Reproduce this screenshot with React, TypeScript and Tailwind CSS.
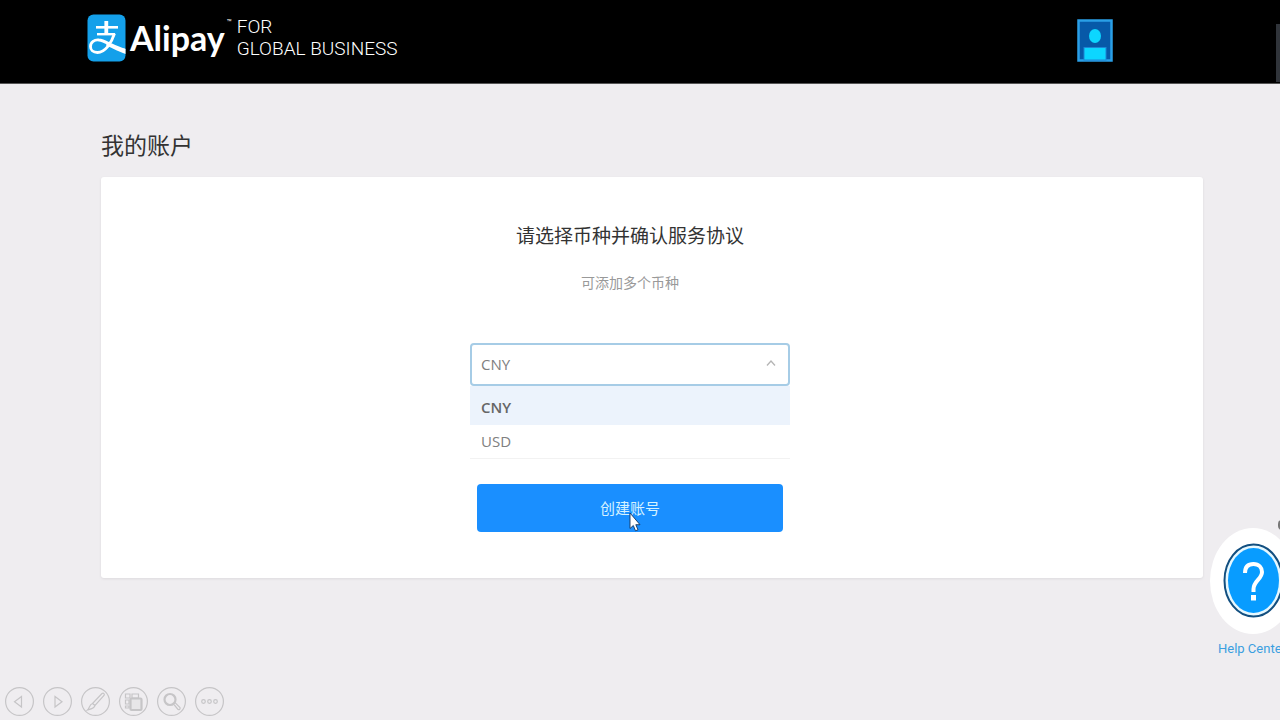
import { useState } from "react";
import type { ReactNode } from "react";

const currencies = ["CNY", "USD"];

function LogoMark() {
  return (
    <svg viewBox="0 0 39 48" className="h-12 w-[39px] shrink-0" aria-hidden="true">
      <rect x="0.5" y="0.5" width="38" height="47" rx="6" fill="#14a0ea" />
      <g fill="none" stroke="#fff">
        <path d="M9 13.3H31" strokeWidth="2.6" />
        <path d="M19.3 7V20" strokeWidth="3.8" />
        <path d="M10 20.2H28" strokeWidth="2.4" />
        <path
          d="M27.5 19.5C24.5 29 18 38.5 10.5 38.5C6 38.5 3.5 36 3.5 32.5C3.5 28 7.5 25.5 12 26C18 26.5 26 33 38 36"
          strokeWidth="2.8"
        />
      </g>
      <path d="M20 28.5C26 32 33 34.5 38.5 35V40C33 38 26 34.5 19 31.5Z" fill="#fff" />
    </svg>
  );
}

function AccountIcon() {
  return (
    <svg viewBox="0 0 36 44" className="h-11 w-9" aria-hidden="true">
      <rect x="1.5" y="2.5" width="33" height="40" fill="#0759a8" stroke="#2a9fe6" strokeWidth="2.5" />
      <ellipse cx="18" cy="18" rx="6" ry="7" fill="#0cd6ff" />
      <rect x="7" y="29.5" width="22" height="12.5" fill="#0cd6ff" stroke="#1d86d4" />
    </svg>
  );
}

function HelpIcon() {
  return (
    <svg viewBox="0 0 86 106" className="h-[106px] w-[86px]" aria-hidden="true">
      <ellipse cx="43" cy="53" rx="43" ry="53" fill="#fff" />
      <ellipse cx="43.5" cy="52.5" rx="29" ry="36" fill="#e6f8ff" stroke="#124f80" strokeWidth="2" />
      <ellipse cx="43.5" cy="52.5" rx="25.5" ry="32.5" fill="#089cff" />
      <path
        d="M35 45C35 38.5 38.5 36 43.5 36C49 36 52 39.5 52 44C52 51 43.5 53 43.5 61V64"
        fill="none"
        stroke="#fff"
        strokeWidth="4"
      />
      <rect x="41" y="67" width="5" height="5.5" fill="#fff" />
    </svg>
  );
}

function Pointer() {
  return (
    <svg viewBox="0 0 12 20" className="absolute top-7 left-[152px] h-5 w-3" aria-hidden="true">
      <path
        d="M1 1V16.5L4.3 13.5L6.5 18.8L9 17.8L6.8 12.7H11Z"
        fill="#fff"
        stroke="#17375c"
        strokeWidth="0.9"
      />
    </svg>
  );
}

const controls: { label: string; icon: ReactNode }[] = [
  { label: "Previous", icon: <path d="M16.5 9.5V20L9.5 14.7Z" /> },
  { label: "Next", icon: <path d="M12 9.5V20L19 14.7Z" /> },
  {
    label: "Pen",
    icon: (
      <path d="M21 6.5C22.5 5.5 24 7 23 8.5L14 18.5L11.5 16.5ZM11.5 16.5L14 18.5C13 21.5 10 22 6.5 23C8.5 21 8.5 17.5 11.5 16.5Z" />
    ),
  },
  {
    label: "Slides",
    icon: (
      <>
        <path d="M6.5 7H11V11H6.5ZM13 7H19.5V11H13ZM6.5 13H10V17H6.5ZM6.5 19H10V21H6.5Z" />
        <rect x="11.5" y="11.5" width="11" height="11.5" rx="1" fill="#e7e6e8" strokeWidth="2.2" />
      </>
    ),
  },
  {
    label: "Zoom",
    icon: (
      <>
        <circle cx="13" cy="12.5" r="5.5" strokeWidth="2.2" />
        <path d="M16.5 17L18 15.5L23 20.5C23.5 22 22.5 23 21 22.5Z" />
      </>
    ),
  },
  {
    label: "More",
    icon: (
      <>
        <circle cx="8.5" cy="14.5" r="1.8" />
        <circle cx="14.5" cy="14.5" r="1.8" />
        <circle cx="20.5" cy="14.5" r="1.8" />
      </>
    ),
  },
];

export default function App() {
  const [currency, setCurrency] = useState("CNY");

  return (
    <div className="relative flex min-h-screen flex-col overflow-hidden bg-[#efedf0] font-['Open_Sans','Noto_Sans_CJK_SC',sans-serif] text-[#333]">
      <header className="flex h-[84px] items-start justify-between border-b border-[#555] bg-black pt-[14px] pr-[167px] pl-[87px] text-white">
        <a href="#home" className="flex items-start">
          <LogoMark />
          <span className="ml-1 font-[Lato] text-[34px] leading-[48px] font-bold">Alipay</span>
          <span className="mt-1 ml-[2px] font-[Roboto] text-[8px] leading-[10px]">™</span>
          <span className="mt-[2px] ml-[5px] flex flex-col font-[Roboto] text-[19px] leading-[22px] font-light">
            <span>FOR</span>
            <span>GLOBAL BUSINESS</span>
          </span>
        </a>
        <button type="button" aria-label="Account" className="mt-1">
          <AccountIcon />
        </button>
      </header>

      <main className="mr-[77px] ml-[101px] pt-[42px]">
        <h1 className="text-[23px] leading-[38px]">我的账户</h1>
        <section className="mt-[13px] flex flex-col items-center rounded-[3px] bg-white pt-[42px] pr-[44px] pb-[46px] shadow-[0_1px_3px_rgba(0,0,0,0.08)]">
          <h2 className="text-[19px] leading-[34px]">请选择币种并确认服务协议</h2>
          <p className="mt-[18px] text-[14px] leading-6 text-[#999]">可添加多个币种</p>

          <div className="relative mt-12 w-80">
            <select
              aria-label="币种"
              value={currency}
              onChange={(event) => setCurrency(event.target.value)}
              className="block h-[43px] w-full appearance-none rounded-[4px] border-2 border-[#a6cce6] bg-white px-[9px] text-[15px] text-[#808080] outline-none"
            >
              {currencies.map((code) => (
                <option key={code}>{code}</option>
              ))}
            </select>
            <svg
              viewBox="0 0 10 8"
              className="pointer-events-none absolute top-4 right-[14px] h-2 w-[10px]"
              fill="none"
              stroke="#b5b5b5"
              strokeWidth="1.3"
              aria-hidden="true"
            >
              <path d="M1 6.5L5 2L9 6.5" />
            </svg>
            <ul className="absolute top-full left-0 w-full border-b border-[#f2f2f2] bg-white text-[15px] text-[#808080]">
              {currencies.map((code) => (
                <li key={code}>
                  <button
                    type="button"
                    onClick={() => setCurrency(code)}
                    className={
                      code === currency
                        ? "block h-[39px] w-full bg-[#ecf3fc] px-[11px] pt-1 text-left font-semibold text-[#666]"
                        : "block h-[33px] w-full px-[11px] text-left"
                    }
                  >
                    {code}
                  </button>
                </li>
              ))}
            </ul>
          </div>

          <button
            type="button"
            className="relative mt-[98px] h-[48px] w-[306px] rounded-[4px] bg-[#1a8fff] text-[15px] text-[#d5f2ff]"
          >
            创建账号
            <Pointer />
          </button>
        </section>
      </main>

      <div className="absolute top-6 right-0 h-[58px] w-1 bg-[#30343a]" />
      <div className="absolute top-[520px] right-[-6px] h-[10px] w-2 rounded-full bg-[#777]" />
      <a
        href="#help"
        className="absolute top-[528px] right-[-16px] flex w-[86px] flex-col items-center leading-5 whitespace-nowrap text-[#3b9fe0]"
      >
        <HelpIcon />
        <span className="mt-[5px] ml-2 self-start font-[Roboto] text-[13px]">Help Center</span>
      </a>

      <nav aria-label="Slide show" className="absolute bottom-1 left-[5px] flex gap-[9px]">
        {controls.map(({ label, icon }) => (
          <button key={label} type="button" aria-label={label}>
            <svg viewBox="0 0 29 29" className="size-[29px]" fill="none" stroke="#c6c5c7" strokeWidth="1.2">
              <circle cx="14.5" cy="14.5" r="13.9" />
              {icon}
            </svg>
          </button>
        ))}
      </nav>
    </div>
  );
}
